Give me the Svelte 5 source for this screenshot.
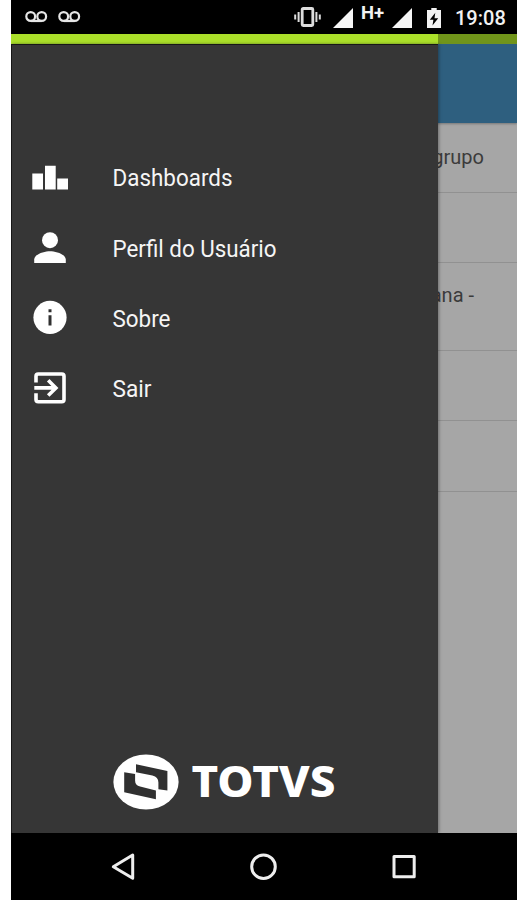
<script lang="ts">
    type Item = { icon: string, text: string, width: number }

    const items: Item[] = [
        { icon: 'dashboards', text: 'Dashboards', width: 120 },
        { icon: 'person', text: 'Perfil do Usuário', width: 164 },
        { icon: 'info', text: 'Sobre', width: 58 },
        { icon: 'exit', text: 'Sair', width: 39 }
    ]

    const rows = [
        { text: 'grupo', height: 70, end: 33 },
        { text: '', height: 70, end: 0 },
        { text: 'ana -', height: 88, end: 43 },
        { text: '', height: 70, end: 0 },
        { text: '', height: 71, end: 0 }
    ]
</script>

{#snippet voicemail()}
    <svg class="voicemail" width="23" height="14" viewBox="0 0 23 14">
        <circle cx="5.7" cy="6.5" r="4.4" />
        <circle cx="16.7" cy="6.5" r="4.4" />
        <path d="M5.7 11h11" />
    </svg>
{/snippet}

{#snippet signal()}
    <svg class="signal" width="20" height="20" viewBox="0 0 20 20">
        <path d="M0 20L20 0v20z" />
    </svg>
{/snippet}

<div class="phone">
    <header class="status">
        <div class="notifications">
            {@render voicemail()}
            {@render voicemail()}
        </div>
        <div class="system">
            <svg class="vibrate" width="27" height="20" viewBox="0 0 27 20">
                <rect x="8.2" y="1.5" width="10.6" height="17" rx="1" stroke-width="2.8" />
                <path d="M4.6 5v10M1.2 7.5v5M22.4 5v10M25.8 7.5v5" stroke-width="2" />
            </svg>
            {@render signal()}
            <span class="network">H+</span>
            {@render signal()}
            <svg class="battery" width="14" height="20" viewBox="0 0 14 20">
                <path d="M4.3 0h5.4v2H14v18H0V2h4.3z" fill="#f2f2f2" />
                <path d="M8.3 4.7L2.8 11.8h3.6l-.9 5.8 5.7-7.4H7.5z" fill="#000" />
            </svg>
            <span class="time">19:08</span>
        </div>
    </header>

    <main>
        <div class="accent"></div>
        <div class="toolbar"></div>
        <ul class="list">
            {#each rows as { text, height, end }}
                <li style="height: {height}px; padding-right: {end}px">{text}</li>
            {/each}
        </ul>

        <aside class="drawer">
            <nav>
                {#each items as { icon, text, width }}
                    <button type="button">
                        <svg class="icon" width="40" height="40" viewBox="0 0 40 40">
                            {#if icon === 'dashboards'}
                                <path d="M2.3 15.5H13v16H2.3zM15 7.8h10.7v23.7H15zM27.2 20.5H38v11H27.2z" />
                            {:else if icon === 'person'}
                                <circle cx="20" cy="11.2" r="8" />
                                <path d="M4.2 34v-3.4c0-5.6 10.4-8.4 15.8-8.4s15.8 2.8 15.8 8.4V34z" />
                            {:else if icon === 'info'}
                                <circle cx="20" cy="18.4" r="16.6" />
                                <path class="cut" d="M18.5 10.2h3v3h-3zM18.5 16.2h3v10.3h-3z" />
                            {:else}
                                <path class="line" d="M6 13.5V7.2Q6 5 8.2 5h23.6Q34 5 34 7.2v23.4Q34 32.8 31.8 32.8H8.2Q6 32.8 6 30.6v-6.3" />
                                <path class="line" d="M4.3 18.9H26M18.2 11.2l7.7 7.7-7.7 7.7" />
                            {/if}
                        </svg>
                        <svg class="label" {width} height="30">
                            <text x="0.5" y="23" textLength={width} lengthAdjust="spacingAndGlyphs">{text}</text>
                        </svg>
                    </button>
                {/each}
            </nav>
            <svg class="logo" width="226" height="60" viewBox="0 0 226 60">
                <ellipse cx="34" cy="30" rx="32.6" ry="27.6" />
                <path class="cut" d="M24 12.2L55.4 19v19.6l-9-1.3v-6.8q0-5.7-6-7.1L24 20.3z" />
                <path class="cut" d="M12.2 20.2l10.9 1.9v6.6q0 4.5 5 5.8l15.8 4v8.7l-31.7-7z" />
                <text x="79.5" y="44.5" textLength="144" lengthAdjust="spacingAndGlyphs">TOTVS</text>
            </svg>
        </aside>
    </main>

    <footer>
        <svg width="506" height="67" viewBox="0 0 506 67">
            <path d="M121.7 22v23.2L102.3 33.8z" />
            <circle cx="252.5" cy="33.7" r="11.8" />
            <path d="M383 23.6h20.2v20.2H383z" />
        </svg>
    </footer>
</div>

<style>
:global(body) {
    background-color: #fff;
}

.phone {
    box-sizing: border-box;
    display: flex;
    flex-direction: column;
    font-family: Roboto, sans-serif;
    height: 900px;
    margin-left: 11px;
    overflow: hidden;
    width: 506px;
}

.status {
    background-color: #000;
    color: #f2f2f2;
    display: flex;
    flex: none;
    height: 34px;
    justify-content: space-between;
}

.notifications {
    display: flex;
    gap: 10.5px;
    padding: 10px 0 0 13.5px;
}

.voicemail {
    fill: none;
    stroke: #e6e6e6;
    stroke-width: 2.2;
}

.system {
    display: flex;
    padding: 7px 12px 0 0;
}

.vibrate {
    fill: none;
    margin-right: 12px;
    stroke: #ddd;
}

.signal {
    fill: #f6f6f6;
    margin-top: 1px;
}

.network {
    font-size: 18.5px;
    font-weight: 700;
    line-height: 18px;
    margin: -3px 8px 0;
    width: 23px;
}

.battery {
    margin: 1px 14px 0 15px;
}

.time {
    font-size: 20px;
    font-weight: 500;
    line-height: 22px;
    width: 50px;
}

main {
    background-color: #a6a6a6;
    height: 799px;
    position: relative;
}

.accent {
    background: linear-gradient(to right, #abe02a 427px, #71951a 427px);
    height: 10px;
}

.toolbar {
    background-color: #2e5f7f;
    box-shadow: 0 1px 2px #777;
    height: 79px;
}

.list {
    color: #3b3b3b;
    font-size: 20px;
    list-style: none;
    margin: 0;
    padding: 0;

    & li {
        border-bottom: 1px solid #919191;
        box-sizing: border-box;
        line-height: 24px;
        padding-top: 20px;
        text-align: right;
    }

    & li:first-child {
        padding-top: 22px;
    }
}

.drawer {
    background-color: #363636;
    border-left: 1px solid #171717;
    border-top: 1px solid #171717;
    box-shadow: 1px 0 3px rgb(0 0 0 / 35%);
    box-sizing: border-box;
    display: flex;
    flex-direction: column;
    height: 789px;
    justify-content: space-between;
    left: 0;
    position: absolute;
    top: 10px;
    width: 427px;
}

nav {
    padding-top: 98.3px;

    & button {
        align-items: center;
        background: none;
        border: none;
        display: flex;
        font-family: inherit;
        gap: 42px;
        height: 70.3px;
        padding: 0 0 0 18px;
        width: 100%;
    }
}

.icon {
    fill: #fff;
}

.cut {
    fill: #303030;
}

.line {
    fill: none;
    stroke: #fff;
    stroke-width: 3.6;
}

.label {
    fill: #f5f5f5;
    font-size: 23px;
    overflow: visible;
}

.logo {
    fill: #fff;
    margin: 0 0 21px 100px;

    & text {
        font-family: "Noto Sans", sans-serif;
        font-size: 42px;
        font-weight: 800;
    }
}

footer {
    background-color: #000;
    flex: none;
    height: 67px;

    & svg {
        display: block;
        fill: none;
        stroke: #eee;
        stroke-linejoin: round;
        stroke-width: 3;
    }
}
</style>
